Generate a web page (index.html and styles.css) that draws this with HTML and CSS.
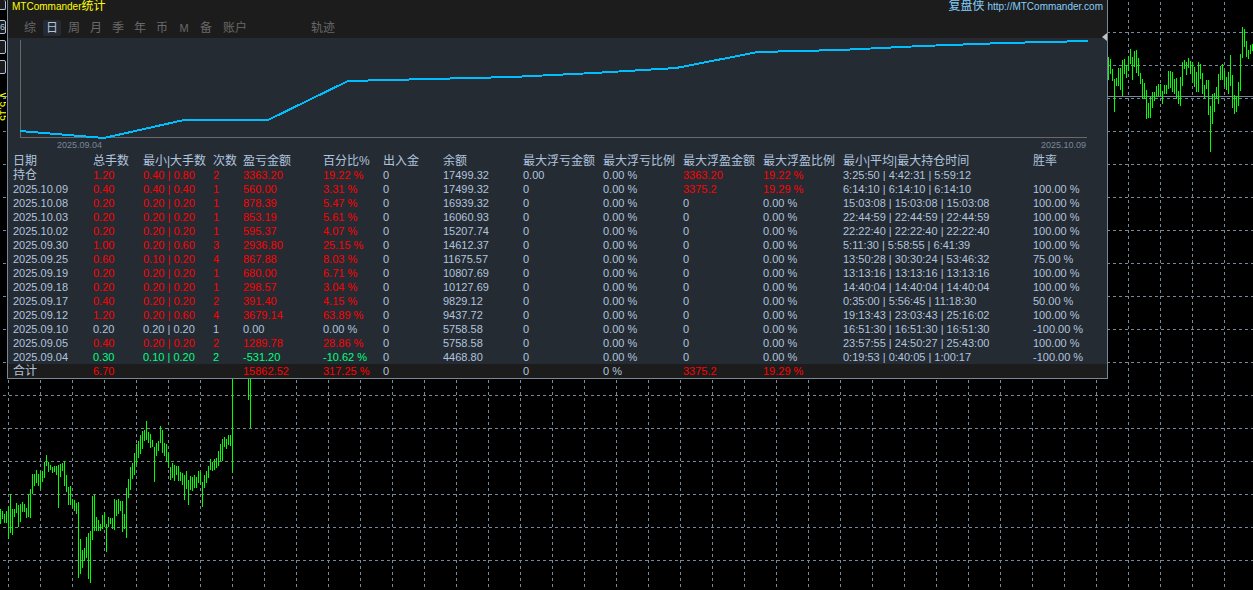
FILE: index.html
```html
<!DOCTYPE html>
<html lang="zh-CN">
<head>
    <meta charset="UTF-8">
    <title>MTCommander统计</title>
    <link rel="stylesheet" href="styles.css">
</head>
<body>
    <main class="chart">
        <svg class="grid" width="100%" height="100%" aria-hidden="true">
            <defs>
                <pattern id="grid-v" x="8" y="2" width="32" height="6" patternUnits="userSpaceOnUse">
                    <rect width="1" height="3" fill="#778899"/>
                </pattern>
                <pattern id="grid-h" x="3" y="32" width="6" height="33" patternUnits="userSpaceOnUse">
                    <rect width="3" height="1" fill="#778899"/>
                </pattern>
            </defs>
            <rect width="100%" height="100%" fill="url(#grid-v)"/>
            <rect width="100%" height="100%" fill="url(#grid-h)"/>
            <rect y="96" width="100%" height="1" fill="#778899"/>
        </svg>
        <svg class="bars bars-left" id="bars-left" width="260" height="590" aria-hidden="true"></svg>
        <svg class="bars bars-right" id="bars-right" width="145" height="590" aria-hidden="true"></svg>

        <nav class="side">
            <button class="side-button side-first" aria-label="菜单"></button>
            <button class="side-button">6</button>
            <button class="side-button" aria-label="下单"></button>
            <button class="side-button" aria-label="平仓"></button>
            <span class="version">V 5.15</span>
        </nav>

        <section class="panel">
            <header class="panel-head">
                <div class="title-row">
                    <h1 class="title">MTCommander<span class="cjk">统计</span></h1>
                    <a class="site" href="http://MTCommander.com"><span class="cjk">复盘侠</span> http://MTCommander.com</a>
                </div>
                <div class="tabs">
                    <button class="tab">综</button>
                    <button class="tab active">日</button>
                    <button class="tab">周</button>
                    <button class="tab">月</button>
                    <button class="tab">季</button>
                    <button class="tab">年</button>
                    <button class="tab">币</button>
                    <button class="tab tab-m">M</button>
                    <button class="tab">备</button>
                    <button class="tab tab-wide">账户</button>
                    <button class="tab tab-wide tab-track">轨迹</button>
                </div>
            </header>

            <div class="equity">
                <svg class="curve" viewBox="0 0 1068 101" preserveAspectRatio="none" aria-hidden="true">
                    <path class="axis" d="M0.5 2V99.5H1067"/>
                    <polyline class="line" points="0,93 84,100 164,82 248,82 328,43 410,41 492,39 574,35 656,30 738,14 820,12 902,8 984,5 1068,3"/>
                </svg>
                <div class="dates">
                    <span>2025.09.04</span>
                    <span>2025.10.09</span>
                </div>
            </div>

            <table class="stats">
                <colgroup>
                    <col class="w85"><col class="w50"><col class="w70"><col class="w30"><col class="w80"><col class="w60"><col class="w60">
                    <col class="w80"><col class="w80"><col class="w80"><col class="w80"><col class="w80"><col class="w190"><col>
                </colgroup>
                <thead>
                    <tr><th>日期</th><th>总手数</th><th>最小|大手数</th><th>次数</th><th>盈亏金额</th><th>百分比%</th><th>出入金</th><th>余额</th><th>最大浮亏金额</th><th>最大浮亏比例</th><th>最大浮盈金额</th><th>最大浮盈比例</th><th>最小|平均|最大持仓时间</th><th>胜率</th></tr>
                </thead>
                <tbody>
                    <tr class="up"><td class="cjk">持仓</td><td>1.20</td><td>0.40 | 0.80</td><td>2</td><td>3363.20</td><td>19.22 %</td><td>0</td><td>17499.32</td><td>0.00</td><td>0.00 %</td><td class="red">3363.20</td><td class="red">19.22 %</td><td>3:25:50 | 4:42:31 | 5:59:12</td><td></td></tr>
                    <tr class="up"><td>2025.10.09</td><td>0.40</td><td>0.40 | 0.40</td><td>1</td><td>560.00</td><td>3.31 %</td><td>0</td><td>17499.32</td><td>0</td><td>0.00 %</td><td class="red">3375.2</td><td class="red">19.29 %</td><td>6:14:10 | 6:14:10 | 6:14:10</td><td>100.00 %</td></tr>
                    <tr class="up"><td>2025.10.08</td><td>0.20</td><td>0.20 | 0.20</td><td>1</td><td>878.39</td><td>5.47 %</td><td>0</td><td>16939.32</td><td>0</td><td>0.00 %</td><td>0</td><td>0.00 %</td><td>15:03:08 | 15:03:08 | 15:03:08</td><td>100.00 %</td></tr>
                    <tr class="up"><td>2025.10.03</td><td>0.20</td><td>0.20 | 0.20</td><td>1</td><td>853.19</td><td>5.61 %</td><td>0</td><td>16060.93</td><td>0</td><td>0.00 %</td><td>0</td><td>0.00 %</td><td>22:44:59 | 22:44:59 | 22:44:59</td><td>100.00 %</td></tr>
                    <tr class="up"><td>2025.10.02</td><td>0.20</td><td>0.20 | 0.20</td><td>1</td><td>595.37</td><td>4.07 %</td><td>0</td><td>15207.74</td><td>0</td><td>0.00 %</td><td>0</td><td>0.00 %</td><td>22:22:40 | 22:22:40 | 22:22:40</td><td>100.00 %</td></tr>
                    <tr class="up"><td>2025.09.30</td><td>1.00</td><td>0.20 | 0.60</td><td>3</td><td>2936.80</td><td>25.15 %</td><td>0</td><td>14612.37</td><td>0</td><td>0.00 %</td><td>0</td><td>0.00 %</td><td>5:11:30 | 5:58:55 | 6:41:39</td><td>100.00 %</td></tr>
                    <tr class="up"><td>2025.09.25</td><td>0.60</td><td>0.10 | 0.20</td><td>4</td><td>867.88</td><td>8.03 %</td><td>0</td><td>11675.57</td><td>0</td><td>0.00 %</td><td>0</td><td>0.00 %</td><td>13:50:28 | 30:30:24 | 53:46:32</td><td>75.00 %</td></tr>
                    <tr class="up"><td>2025.09.19</td><td>0.20</td><td>0.20 | 0.20</td><td>1</td><td>680.00</td><td>6.71 %</td><td>0</td><td>10807.69</td><td>0</td><td>0.00 %</td><td>0</td><td>0.00 %</td><td>13:13:16 | 13:13:16 | 13:13:16</td><td>100.00 %</td></tr>
                    <tr class="up"><td>2025.09.18</td><td>0.20</td><td>0.20 | 0.20</td><td>1</td><td>298.57</td><td>3.04 %</td><td>0</td><td>10127.69</td><td>0</td><td>0.00 %</td><td>0</td><td>0.00 %</td><td>14:40:04 | 14:40:04 | 14:40:04</td><td>100.00 %</td></tr>
                    <tr class="up"><td>2025.09.17</td><td>0.40</td><td>0.20 | 0.20</td><td>2</td><td>391.40</td><td>4.15 %</td><td>0</td><td>9829.12</td><td>0</td><td>0.00 %</td><td>0</td><td>0.00 %</td><td>0:35:00 | 5:56:45 | 11:18:30</td><td>50.00 %</td></tr>
                    <tr class="up"><td>2025.09.12</td><td>1.20</td><td>0.20 | 0.60</td><td>4</td><td>3679.14</td><td>63.89 %</td><td>0</td><td>9437.72</td><td>0</td><td>0.00 %</td><td>0</td><td>0.00 %</td><td>19:13:43 | 23:03:43 | 25:16:02</td><td>100.00 %</td></tr>
                    <tr><td>2025.09.10</td><td>0.20</td><td>0.20 | 0.20</td><td>1</td><td>0.00</td><td>0.00 %</td><td>0</td><td>5758.58</td><td>0</td><td>0.00 %</td><td>0</td><td>0.00 %</td><td>16:51:30 | 16:51:30 | 16:51:30</td><td>-100.00 %</td></tr>
                    <tr class="up"><td>2025.09.05</td><td>0.40</td><td>0.20 | 0.20</td><td>2</td><td>1289.78</td><td>28.86 %</td><td>0</td><td>5758.58</td><td>0</td><td>0.00 %</td><td>0</td><td>0.00 %</td><td>23:57:55 | 24:50:27 | 25:43:00</td><td>100.00 %</td></tr>
                    <tr class="down"><td>2025.09.04</td><td>0.30</td><td>0.10 | 0.20</td><td>2</td><td>-531.20</td><td>-10.62 %</td><td>0</td><td>4468.80</td><td>0</td><td>0.00 %</td><td>0</td><td>0.00 %</td><td>0:19:53 | 0:40:05 | 1:00:17</td><td>-100.00 %</td></tr>
                </tbody>
                <tfoot>
                    <tr class="up"><td class="cjk">合计</td><td>6.70</td><td></td><td></td><td>15862.52</td><td>317.25 %</td><td>0</td><td></td><td>0</td><td>0 %</td><td class="red">3375.2</td><td class="red">19.29 %</td><td></td><td></td></tr>
                </tfoot>
            </table>

            <svg class="shift-mark" width="5" height="8" viewBox="0 0 5 8" aria-hidden="true">
                <path d="M0 4L5 0V8Z" fill="#c0c0c0"/>
            </svg>
        </section>
    </main>
    <script>
        // 每根K线: x, 最高, 最低
        var leftBars = [
            [0,509,524],[2,511,519],[4,514,523],[6,511,523],[8,506,539],[10,494,533],[12,509,535],[14,509,517],
            [16,503,513],[18,505,527],[20,504,522],[22,502,512],[24,504,512],[26,508,518],[28,494,517],[30,489,518],
            [32,474,494],[34,474,486],[36,470,483],[38,474,486],[40,471,489],[42,471,482],[44,462,478],[46,455,466],
            [48,462,472],[50,465,470],[52,467,473],[54,466,472],[56,466,475],[58,465,508],[60,464,477],[62,463,471],
            [64,461,486],[66,475,492],[68,487,505],[70,486,505],[72,499,508],[74,500,511],[76,503,514],[78,502,578],
            [80,539,574],[82,550,568],[84,548,561],[86,537,558],[88,533,579],[90,531,583],[92,496,540],[94,495,531],
            [96,517,531],[98,520,531],[100,524,531],[102,515,529],[104,512,527],[106,524,552],[108,517,527],[110,518,524],
            [112,518,529],[114,499,530],[116,500,516],[118,499,514],[120,501,511],[122,501,532],[124,514,529],[126,488,538],
            [128,479,498],[130,467,490],[132,463,479],[134,453,475],[136,444,465],[138,441,458],[140,435,454],[142,431,449],
            [144,430,441],[146,421,440],[148,432,443],[150,434,448],[152,440,447],[154,447,482],[156,443,456],[158,441,451],
            [160,426,443],[162,430,453],[164,443,456],[166,444,462],[168,453,468],[170,467,480],[172,463,478],[174,465,481],
            [176,466,475],[178,466,481],[180,472,481],[182,473,485],[184,475,500],[186,471,489],[188,480,505],[190,476,490],
            [192,477,491],[194,475,488],[196,477,488],[198,471,483],[200,472,485],[202,482,507],[204,475,488],[206,471,483],
            [208,466,478],[210,459,470],[212,462,471],[214,459,470],[216,458,468],[218,451,466],[220,444,461],[222,439,461],
            [224,437,447],[226,439,449],[228,435,445],[230,435,446],[232,379,473],[248,379,400],[250,379,428]
        ];
        var rightBars = [
            [0,57,80],[2,59,74],[4,69,81],[6,79,112],[8,78,86],[10,68,86],[12,68,90],[14,60,96],
            [16,59,74],[18,65,78],[20,56,71],[22,49,64],[24,57,80],[26,51,67],[28,50,73],[30,58,76],
            [32,73,84],[34,79,99],[36,83,99],[38,90,119],[40,103,118],[42,97,118],[44,92,108],[46,92,101],
            [48,86,97],[50,84,96],[52,84,96],[54,91,104],[56,85,94],[58,85,94],[60,71,89],[62,71,88],
            [64,72,92],[66,79,94],[68,78,99],[70,91,104],[72,77,106],[74,62,86],[76,60,69],[78,62,75],
            [80,58,68],[82,61,74],[84,62,83],[86,67,87],[88,72,92],[90,62,92],[92,64,79],[94,73,94],
            [96,85,98],[98,80,89],[100,80,115],[102,106,152],[104,94,124],[106,93,112],[108,87,98],[110,74,104],
            [112,66,80],[114,64,80],[116,71,87],[118,77,90],[120,72,94],[122,55,86],[124,75,108],[126,95,114],
            [128,96,112],[130,82,106],[132,54,91],[134,27,58],[136,29,47],[138,41,57],[140,50,59],[142,45,54],[144,44,51]
        ];

        function drawBars(id, bars) {
            var svg = document.getElementById(id);
            bars.forEach(function (bar) {
                var rect = document.createElementNS('http://www.w3.org/2000/svg', 'rect');
                rect.setAttribute('x', bar[0]);
                rect.setAttribute('y', bar[1]);
                rect.setAttribute('width', 1);
                rect.setAttribute('height', bar[2] - bar[1]);
                svg.appendChild(rect);
            });
        }

        drawBars('bars-left', leftBars);
        drawBars('bars-right', rightBars);
    </script>
</body>
</html>
```
FILE: styles.css
```css
body {
    margin: 0;
    background-color: #000;
    color: #b0c4de;
    font-family: "Liberation Sans", Arial, "Noto Sans CJK SC", sans-serif;
    font-size: 11px;
}
button {
    font-family: inherit;
    padding: 0;
    border: none;
    cursor: pointer;
}
.chart {
    position: relative;
    min-height: 100vh;
    overflow: hidden;
}
.grid {
    position: absolute;
    top: 0;
    left: 0;
}
.bars {
    position: absolute;
    top: 0;
    fill: #00ff00;
}
.bars-left {
    left: 0;
}
.bars-right {
    right: 0;
}

/* 左侧按钮条 */
.side {
    position: absolute;
    top: 0;
    left: 0;
    width: 6px;
    display: flex;
    flex-direction: column;
    align-items: flex-end;
    gap: 6px;
    overflow: hidden;
}
.side-button {
    box-sizing: border-box;
    flex: none;
    width: 20px;
    height: 14px;
    border: 1px solid #b0c4de;
    border-radius: 2px;
    background-color: #1c1c1c;
    color: #b0c4de;
    font-size: 9px;
    line-height: 12px;
    text-align: right;
}
.side-first {
    height: 10px;
    border-top: none;
    margin-bottom: 4px;
}
.version {
    writing-mode: vertical-rl;
    margin-top: 12px;
    color: #ffff00;
    font-size: 10px;
    line-height: 6px;
    white-space: nowrap;
}

/* 统计面板 */
.panel {
    position: absolute;
    top: 0;
    left: 7px;
    right: 145px;
    border: 1px solid #778899;
    border-top: none;
    background-color: #252b33;
}
.panel-head {
    height: 38px;
    background-color: #1c1c1c;
}
.title-row {
    display: flex;
    justify-content: space-between;
    padding: 0 4px;
    height: 14px;
    line-height: 13px;
    font-size: 10px;
}
.title {
    margin: 0;
    color: #ffff00;
    font-size: 10px;
    font-weight: normal;
}
.site {
    color: #87cefa;
    text-decoration: none;
}
.cjk {
    font-size: 12px;
}
.tabs {
    display: flex;
    gap: 4px;
    padding: 6px 13px 0;
}
.tab {
    width: 18px;
    height: 16px;
    border-radius: 2px;
    background-color: transparent;
    color: #696969;
    font-size: 12px;
    line-height: 16px;
}
.tab.active {
    background-color: #252b33;
    color: #b0c4de;
}
.tab-m {
    font-size: 11px;
}
.tab-wide {
    width: 32px;
}
.tab-track {
    margin-left: 52px;
}
.equity {
    padding: 0 19px 3px 12px;
}
.curve {
    display: block;
    width: 100%;
    height: 101px;
    shape-rendering: crispEdges;
}
.axis {
    fill: none;
    stroke: #696969;
    stroke-width: 1;
}
.line {
    fill: none;
    stroke: #00bfff;
    stroke-width: 2;
}
.dates {
    display: flex;
    justify-content: space-between;
    padding: 0 2px 0 37px;
    color: #778899;
    font-size: 9px;
    line-height: 12px;
}
.stats {
    width: 100%;
    table-layout: fixed;
    border-collapse: collapse;
}
.stats th,
.stats td {
    height: 14px;
    padding: 0;
    line-height: 14px;
    text-align: left;
    white-space: nowrap;
}
.stats th {
    font-size: 12px;
    font-weight: normal;
}
.stats th:first-child,
.stats td:first-child {
    padding-left: 5px;
}
.stats tfoot {
    background-color: #1c1c1c;
}
.up td:nth-child(n+2):nth-child(-n+6),
.red {
    color: #ff0000;
}
.down td:nth-child(n+2):nth-child(-n+6) {
    color: #00ff7f;
}
.w30 {
    width: 30px;
}
.w50 {
    width: 50px;
}
.w60 {
    width: 60px;
}
.w70 {
    width: 70px;
}
.w80 {
    width: 80px;
}
.w85 {
    width: 85px;
}
.w190 {
    width: 190px;
}
.shift-mark {
    position: absolute;
    top: 33px;
    right: 0;
}
```
